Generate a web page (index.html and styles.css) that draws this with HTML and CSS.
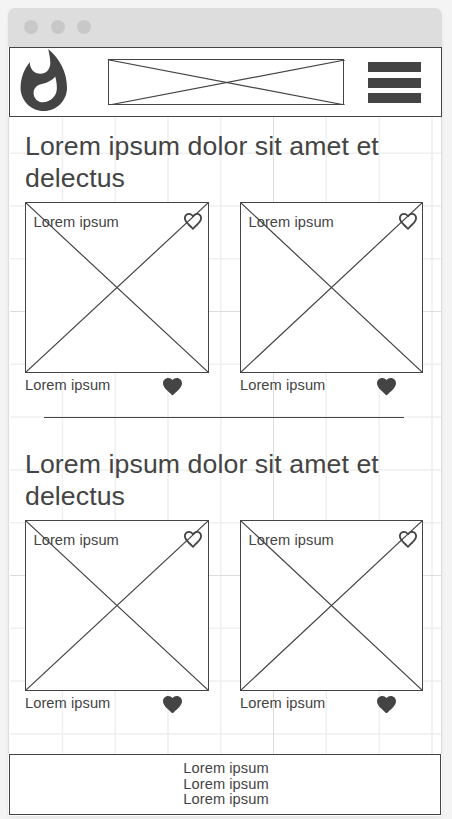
FILE: index.html
```html
<!DOCTYPE html>
<html lang="en">
<head>
<meta charset="utf-8">
<title>Lorem ipsum</title>
<link rel="stylesheet" href="styles.css">
</head>
<body>
<svg class="defs" width="0" height="0">
  <symbol id="outline-heart" viewBox="2 3 20 18.35" preserveAspectRatio="none"><path d="M16.5 3c-1.74 0-3.41.81-4.5 2.09C10.91 3.81 9.24 3 7.5 3 4.42 3 2 5.42 2 8.5c0 3.78 3.4 6.86 8.55 11.54L12 21.35l1.45-1.32C18.6 15.36 22 12.28 22 8.5 22 5.42 19.58 3 16.5 3zm-4.4 15.55l-.1.1-.1-.1C7.14 14.24 4 11.39 4 8.5 4 6.5 5.5 5 7.5 5c1.54 0 3.04.99 3.57 2.36h1.87C13.46 5.99 14.96 5 16.5 5c2 0 3.5 1.5 3.5 3.5 0 2.89-3.14 5.74-7.9 10.05z"/></symbol>
  <symbol id="heart" viewBox="2 3 20 18.35"><path d="M12 21.35l-1.45-1.32C5.4 15.36 2 12.28 2 8.5 2 5.42 4.42 3 7.5 3c1.74 0 3.41.81 4.5 2.09C13.09 3.81 14.76 3 16.5 3 19.58 3 22 5.42 22 8.5c0 3.78-3.4 6.86-8.55 11.54L12 21.35z"/></symbol>
  <symbol id="cross" viewBox="0 0 100 100" preserveAspectRatio="none"><path class="cross-lines" d="M0 0L100 100M100 0L0 100"/></symbol>
</svg>
<div class="window">
  <div class="titlebar"><i class="dot"></i><i class="dot"></i><i class="dot"></i></div>
  <header class="header">
    <svg class="flame" viewBox="3.8 .67 16.2 21.33" preserveAspectRatio="none"><path d="M13.5.67s.74 2.65.74 4.8c0 2.06-1.35 3.73-3.41 3.73-2.07 0-3.63-1.67-3.63-3.73l.03-.36C5.21 7.51 4 10.62 4 14c0 4.42 3.58 8 8 8s8-3.58 8-8C20 8.61 17.41 3.8 13.5.67zM11.71 19c-1.78 0-3.22-1.4-3.22-3.14 0-1.62 1.05-2.76 2.81-3.12 1.77-.36 3.6-1.21 4.62-2.58.39 1.29.59 2.65.59 4.04 0 2.65-2.15 4.8-4.8 4.8z"/></svg>
    <div class="banner"><svg class="cross"><use href="#cross"/></svg></div>
    <div class="menu"><i></i><i></i><i></i></div>
  </header>
  <main class="content">
    <svg class="grid" aria-hidden="true">
      <path class="minor" d="M53.400 0V700M106.200 0V700M159 0V700M211.800 0V700M317.300 0V700M370.200 0V700M423 0V700M1 36.200H432M1 89H432M1 141.700H432M1 247.300H432M1 300.100H432M1 352.900H432M1 405.700H432M1 511.200H432M1 564.100H432M1 617H432"/>
      <path class="major" d="M264.500 0V700M1 194.500H432M1 458.500H432"/>
    </svg>
    <section class="section">
      <h2>Lorem ipsum dolor sit amet et delectus</h2>
      <div class="cards">
        <article class="card">
          <div class="picture"><span>Lorem ipsum</span><svg class="like"><use href="#outline-heart"/></svg><svg class="cross"><use href="#cross"/></svg></div>
          <div class="caption"><span>Lorem ipsum</span><svg class="heart"><use href="#heart"/></svg></div>
        </article>
        <article class="card">
          <div class="picture"><span>Lorem ipsum</span><svg class="like"><use href="#outline-heart"/></svg><svg class="cross"><use href="#cross"/></svg></div>
          <div class="caption"><span>Lorem ipsum</span><svg class="heart"><use href="#heart"/></svg></div>
        </article>
      </div>
    </section>
    <hr>
    <section class="section">
      <h2>Lorem ipsum dolor sit amet et delectus</h2>
      <div class="cards">
        <article class="card">
          <div class="picture"><span>Lorem ipsum</span><svg class="like"><use href="#outline-heart"/></svg><svg class="cross"><use href="#cross"/></svg></div>
          <div class="caption"><span>Lorem ipsum</span><svg class="heart"><use href="#heart"/></svg></div>
        </article>
        <article class="card">
          <div class="picture"><span>Lorem ipsum</span><svg class="like"><use href="#outline-heart"/></svg><svg class="cross"><use href="#cross"/></svg></div>
          <div class="caption"><span>Lorem ipsum</span><svg class="heart"><use href="#heart"/></svg></div>
        </article>
      </div>
    </section>
  </main>
  <footer class="footer"><div>Lorem ipsum</div><div>Lorem ipsum</div><div>Lorem ipsum</div></footer>
</div>
</body>
</html>
```
FILE: styles.css
```css
* { box-sizing: border-box; }
body {
  margin: 0;
  height: 819px;
  padding: 8px 10px 3px 8px;
  overflow: hidden;
  background: #f4f4f4;
  color: #444;
  font: 14.67px/16px "Liberation Sans", Arial, sans-serif;
  letter-spacing: .06px;
}
svg { display: block; flex: none; fill: #444; }
.defs { position: absolute; }
.window {
  width: 434px;
  height: 808px;
  border-radius: 7px 7px 0 0;
  background: #fff;
  box-shadow: 0 2px 4px rgba(0, 0, 0, .06);
}
.titlebar {
  display: flex;
  gap: 12.500px;
  height: 39px;
  padding: 12px 16px;
  border-radius: 7px 7px 0 0;
  background: #ddd;
}
.dot { width: 14px; height: 14px; border-radius: 50%; background: #c8c8c8; }
.header {
  display: flex;
  align-items: flex-start;
  width: 433px;
  height: 70px;
  margin-left: 1px;
  border: 1px solid #444;
  background: #fff;
}
.flame { width: 47px; height: 62px; margin: 1px 0 0 10px; }
.banner { width: 236px; height: 46px; margin: 11px 0 0 41px; border: 1px solid #444; }
.banner .cross { width: 236px; height: 45px; }
.cross { width: 100%; height: 100%; overflow: visible; }
.cross-lines { fill: none; stroke: #444; stroke-width: 1.200px; vector-effect: non-scaling-stroke; }
.menu { display: grid; gap: 5.500px; margin: 14px 0 0 24px; }
.menu i { width: 53px; height: 10px; background: #444; }
.content {
  position: relative;
  height: 637px;
  border: solid #ddd;
  border-width: 0 1px;
}
.grid { position: absolute; top: 0; left: 0; width: 100%; height: 100%; }
.grid path { fill: none; }
.minor { stroke: #f0f0f0; stroke-width: 1.500; }
.major { stroke: #ddd; stroke-width: 1; }
.section { position: relative; padding: 13px 17px 0 16px; }
h2 {
  margin: 0;
  font-size: 26.670px;
  line-height: 32px;
  font-weight: 400;
  letter-spacing: .095px;
}
.cards { display: grid; grid-template-columns: 184px 183px; gap: 31px; margin-top: 8px; }
.picture {
  position: relative;
  display: flex;
  justify-content: space-between;
  height: 171px;
  padding: 11px 6px 0 7.500px;
  border: 1px solid #444;
  background: #fff;
}
.card:last-child .picture { padding-right: 5px; }
.picture .cross { position: absolute; inset: 0; }
.like { width: 18px; height: 17px; margin-top: -1px; }
.caption { display: flex; justify-content: space-between; padding: 4px 27px 0 0; }
.heart { width: 19px; height: 17.500px; margin-top: 1px; }
hr { position: relative; width: 360px; height: 1px; margin: 21px 0 17px 35px; border: 0; background: #444; }
.footer {
  width: 432px;
  height: 61px;
  margin-left: 1px;
  padding: 6px 0 0 2px;
  border: 1px solid #444;
  background: #fff;
  text-align: center;
  line-height: 15.500px;
}
```
